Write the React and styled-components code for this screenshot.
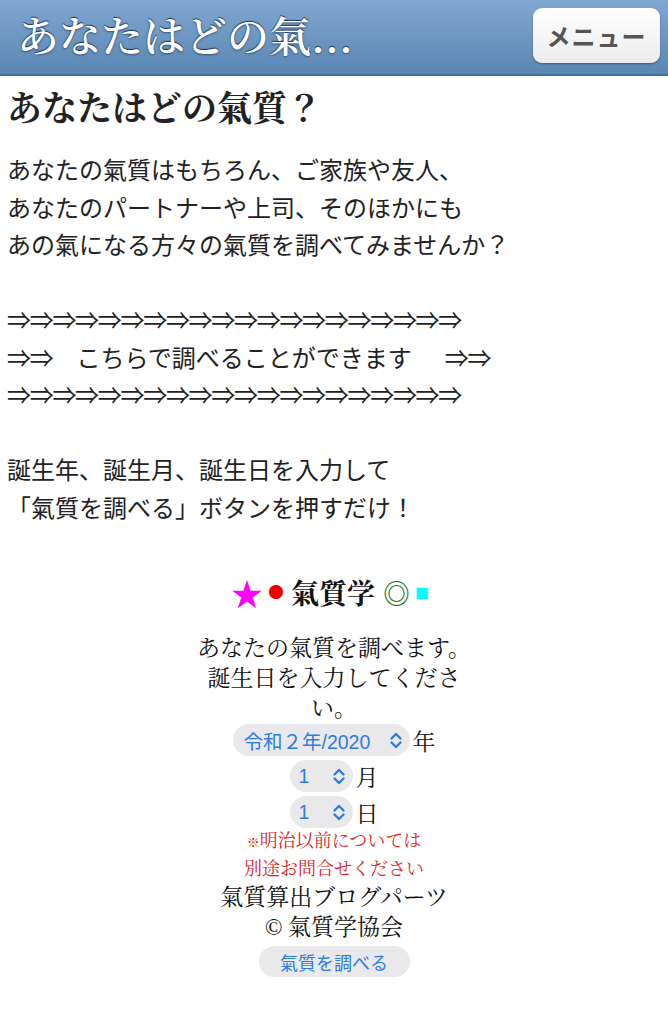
import React from "react";
import styled, { createGlobalStyle } from "styled-components";

const SERIF = `"Liberation Serif", "Noto Serif CJK JP", "Noto Sans CJK JP", serif`;
const JSERIF = `"Noto Serif CJK JP", "Liberation Serif", serif`;
const SANS = `"Liberation Sans", "Noto Sans CJK JP", sans-serif`;

const Global = createGlobalStyle`
  html, body { margin: 0; padding: 0; background: #fff; }
  body { font-family: ${SANS}; color: #111; }
  * { box-sizing: border-box; }
`;

const Page = styled.div`
  width: 668px;
  min-height: 1024px;
  background: #fff;
`;

const Header = styled.header`
  height: 76px;
  display: flex;
  align-items: center;
  justify-content: space-between;
  padding: 0 8px 0 17px;
  background: linear-gradient(#80a7d0, #5b85b3);
  border-bottom: 2px solid #3f6c9c;
`;

const SiteTitle = styled.h1`
  margin: -6px 0 0;
  font-family: ${JSERIF};
  font-weight: 600;
  font-size: 42px;
  line-height: 1;
  color: #fff;
  text-shadow: 0 -1px 1px rgba(20, 40, 80, 0.9), 0 1px 2px rgba(20, 40, 80, 0.6);
`;

const MenuButton = styled.button`
  width: 127px;
  height: 55px;
  margin-top: -3px;
  border: none;
  border-radius: 9px;
  background: linear-gradient(#ffffff, #ececec);
  box-shadow: 0 1px 2px rgba(0, 0, 0, 0.35);
  font-family: ${SANS};
  font-weight: bold;
  font-size: 24px;
  color: #555;
  letter-spacing: 1px;
  padding: 0;
`;

const Main = styled.main`
  padding: 0 7px;
`;

const Heading = styled.h2`
  margin: 8px 0 0;
  font-family: ${JSERIF};
  font-weight: bold;
  font-size: 35px;
  line-height: 44px;
  color: #222;
`;

const Paragraph = styled.p`
  margin: ${(p) => p.$top || 0}px 0 0;
  font-family: ${SANS};
  font-size: 24px;
  line-height: 37.5px;
  color: #222;
  white-space: nowrap;
`;

const Arrows = styled.span`
  letter-spacing: -1.3px;
  margin-left: ${(p) => p.$gap || 0}px;
`;

const Widget = styled.section`
  width: 280px;
  margin: 45px auto 0;
  display: flex;
  flex-direction: column;
  align-items: center;
  text-align: center;
  font-family: ${SERIF};
  color: #111;
`;

const WidgetTitle = styled.div`
  display: flex;
  align-items: center;
  height: 40px;
  margin-left: -8px;
  font-family: ${JSERIF};
  font-size: 28px;
  font-weight: bold;
  white-space: nowrap;
`;

const Mark = styled.span`
  color: ${(p) => p.$color};
  font-weight: normal;
  font-size: ${(p) => p.$size || 28}px;
  margin-left: ${(p) => p.$ml ?? 5}px;
  margin-right: ${(p) => p.$mr ?? 5}px;
  line-height: 1;
`;

const Desc = styled.p`
  margin: 22px 0 0;
  font-size: 23px;
  line-height: 30px;
  line-break: strict;
`;

const Row = styled.div`
  display: flex;
  align-items: center;
  height: 32px;
  margin-top: ${(p) => p.$top || 0}px;
`;

const Select = styled.div`
  display: flex;
  align-items: center;
  justify-content: space-between;
  width: ${(p) => p.$width}px;
  height: 32px;
  padding: 0 7px 0 ${(p) => p.$pad || 10}px;
  border-radius: 16px;
  background: #e9e9ec;
  color: #2e7be0;
  font-family: ${SANS};
  font-size: 19.5px;
  white-space: nowrap;
`;

const Unit = styled.span`
  font-size: 23px;
  margin-left: 3px;
`;

const Note = styled.div`
  color: #e02424;
  font-size: 18px;
  line-height: 27px;
  white-space: nowrap;
  &:first-of-type { margin-top: 1px; }
`;

const Small = styled.span`
  font-size: 13px;
  font-weight: bold;
`;

const Credit = styled.div`
  font-size: 23px;
  line-height: 30px;
  white-space: nowrap;
`;

const SubmitButton = styled.button`
  margin-top: 3px;
  width: 151px;
  height: 31px;
  border: none;
  border-radius: 16px;
  background: #e9e9ec;
  color: #2e7be0;
  font-family: ${SANS};
  font-size: 18px;
  padding: 0;
`;

const Chevron = () => (
  <svg width="14" height="17" viewBox="0 0 14 17" fill="none" stroke="#2e7be0" strokeWidth="2.4" strokeLinecap="round" strokeLinejoin="round">
    <path d="M2.5 6.5 L7 2 L11.5 6.5" />
    <path d="M2.5 10.5 L7 15 L11.5 10.5" />
  </svg>
);

export default function App() {
  return (
    <Page>
      <Global />
      <Header>
        <SiteTitle>あなたはどの氣...</SiteTitle>
        <MenuButton>メニュー</MenuButton>
      </Header>
      <Main>
        <Heading>あなたはどの氣質？</Heading>
        <Paragraph $top={24}>
          あなたの氣質はもちろん、ご家族や友人、
          <br />
          あなたのパートナーや上司、そのほかにも
          <br />
          あの氣になる方々の氣質を調べてみませんか？
        </Paragraph>
        <Paragraph $top={37.5}>
          <Arrows>⇒⇒⇒⇒⇒⇒⇒⇒⇒⇒⇒⇒⇒⇒⇒⇒⇒⇒⇒⇒</Arrows>
          <br />
          <Arrows>⇒⇒</Arrows>　こちらで調べることができます　<Arrows $gap={9}>⇒⇒</Arrows>
          <br />
          <Arrows>⇒⇒⇒⇒⇒⇒⇒⇒⇒⇒⇒⇒⇒⇒⇒⇒⇒⇒⇒⇒</Arrows>
        </Paragraph>
        <Paragraph $top={37.5}>
          誕生年、誕生月、誕生日を入力して
          <br />
          「氣質を調べる」ボタンを押すだけ！
        </Paragraph>
        <Widget>
          <WidgetTitle>
            <Mark $color="#ff00ff" $size={32} $ml={0} $mr={2}>★</Mark>
            <Mark $color="#ee0000" $size={16} $ml={3} $mr={7}>●</Mark>
            氣質学
            <Mark $color="#1a7a1a" $size={27} $ml={8} $mr={4}>◎</Mark>
            <Mark $color="#00ffff" $size={14} $ml={1} $mr={0}>■</Mark>
          </WidgetTitle>
          <Desc>あなたの氣質を調べます。誕生日を入力してください。</Desc>
          <Row>
            <Select $width={177} $pad={11}>
              <span>令和２年/2020</span>
              <Chevron />
            </Select>
            <Unit>年</Unit>
          </Row>
          <Row $top={4}>
            <Select $width={63} $pad={9}>
              <span>1</span>
              <Chevron />
            </Select>
            <Unit>月</Unit>
          </Row>
          <Row $top={4}>
            <Select $width={63} $pad={9}>
              <span>1</span>
              <Chevron />
            </Select>
            <Unit>日</Unit>
          </Row>
          <Note>
            <Small>※</Small>明治以前については
          </Note>
          <Note>別途お問合せください</Note>
          <Credit>氣質算出ブログパーツ</Credit>
          <Credit>© 氣質学協会</Credit>
          <SubmitButton>氣質を調べる</SubmitButton>
        </Widget>
      </Main>
    </Page>
  );
}
